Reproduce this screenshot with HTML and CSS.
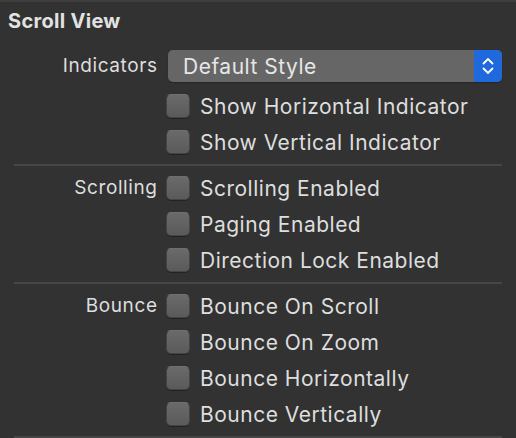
FILE: index.html
```html
<!DOCTYPE html>
<html>
<head>
<meta charset="utf-8">
<link rel="stylesheet" href="styles.css">
</head>
<body>
<div class="panel">
  <div class="title">Scroll View</div>
  <div class="section first">
    <div class="label label-popup">Indicators</div>
    <div class="popup">
      <span class="popup-text">Default Style</span>
      <span class="popup-arrows">
        <svg width="14" height="20" viewBox="0 0 14 20"><path d="M2.5 7.5 L7 3 L11.5 7.5 M2.5 12.5 L7 17 L11.5 12.5" fill="none" stroke="#fff" stroke-width="1.8" stroke-linecap="round" stroke-linejoin="round"/></svg>
      </span>
    </div>
    <div class="label"></div>
    <label class="check"><span class="box"></span><span>Show Horizontal Indicator</span></label>
    <div class="label"></div>
    <label class="check"><span class="box"></span><span>Show Vertical Indicator</span></label>
  </div>
  <div class="sep"></div>
  <div class="section">
    <div class="label">Scrolling</div>
    <label class="check"><span class="box"></span><span>Scrolling Enabled</span></label>
    <div class="label"></div>
    <label class="check"><span class="box"></span><span>Paging Enabled</span></label>
    <div class="label"></div>
    <label class="check"><span class="box"></span><span>Direction Lock Enabled</span></label>
  </div>
  <div class="sep"></div>
  <div class="section">
    <div class="label">Bounce</div>
    <label class="check"><span class="box"></span><span>Bounce On Scroll</span></label>
    <div class="label"></div>
    <label class="check"><span class="box"></span><span>Bounce On Zoom</span></label>
    <div class="label"></div>
    <label class="check"><span class="box"></span><span>Bounce Horizontally</span></label>
    <div class="label"></div>
    <label class="check"><span class="box"></span><span>Bounce Vertically</span></label>
  </div>
  <div class="sep"></div>
</div>
</body>
</html>
```
FILE: styles.css
```css
html, body {
  margin: 0;
  padding: 0;
  background: #323232;
}
.panel {
  width: 516px;
  height: 438px;
  overflow: hidden;
  background: #323232;
  border-top: 2px solid #3e3e3e;
  box-sizing: border-box;
  font-family: Inter, "Noto Sans", sans-serif;
  font-size: 19px;
  color: #dedede;
}
.title {
  height: 40px;
  line-height: 38px;
  padding-left: 8px;
  font-weight: 700;
  font-size: 20px;
  letter-spacing: 0.3px;
  color: #e2e2e2;
}
.section {
  display: grid;
  grid-template-columns: 157px 1fr;
  column-gap: 9px;
  row-gap: 12px;
  padding: 10px 14px 10px 0;
  align-items: center;
}
.section.first {
  padding-top: 8px;
}
.label {
  text-align: right;
  line-height: 24px;
  font-size: 19px;
  letter-spacing: 0.6px;
  margin-right: -0.6px;
}
.popup {
  margin-left: 2px;
  height: 32px;
  border-radius: 5px;
  background: #666666;
  display: flex;
  align-items: center;
  overflow: hidden;
  box-shadow: 0 1px 1px rgba(0,0,0,0.25);
}
.popup-text {
  flex: 1;
  padding-left: 15px;
  font-size: 21px;
  letter-spacing: 0.5px;
  color: #e6e6e6;
}
.popup-arrows {
  width: 28px;
  height: 32px;
  background: #1f69dc;
  display: flex;
  align-items: center;
  justify-content: center;
}
.check {
  display: flex;
  align-items: center;
  height: 24px;
  gap: 10px;
  font-size: 21px;
  letter-spacing: 0.5px;
}
.box {
  flex: none;
  width: 24px;
  height: 24px;
  box-sizing: border-box;
  border-radius: 5px;
  background: linear-gradient(#6a6a6a, #5a5a5a);
  border: 1px solid #454545;
  border-top-color: #6f6f6f;
  box-shadow: 0 1px 0 rgba(0,0,0,0.3);
}
.sep {
  height: 2px;
  margin: 0 14px;
  background: #464646;
}
```
